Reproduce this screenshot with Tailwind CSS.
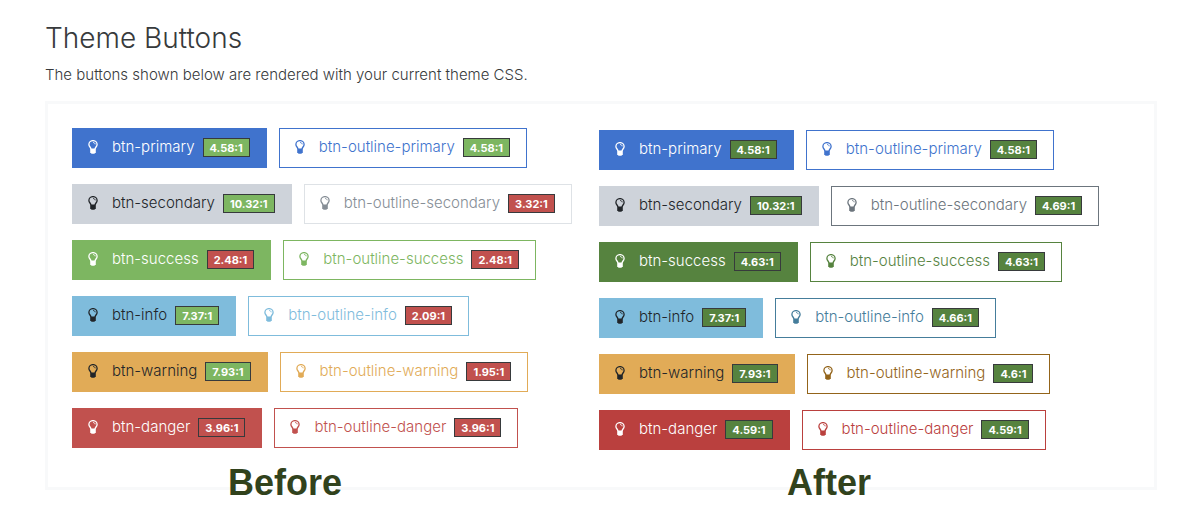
<!DOCTYPE html>
<html lang="en">
<head>
    <meta charset="UTF-8">
    <meta name="viewport" content="width=device-width, initial-scale=1.0">
    <title>Theme Buttons</title>
    <script src="https://cdn.jsdelivr.net/npm/@tailwindcss/browser@4"></script>
</head>
<body class="bg-white text-[#373a3c] font-['Inter',sans-serif]">

    <svg class="hidden">
        <symbol id="bulb" viewBox="0 0 10 14">
            <path d="M2.900 9C2.900 7.300 .9 6.600 .9 4.400A4.100 3.800 0 0 1 9.100 4.400C9.100 6.600 7.100 7.300 7.100 9" fill="none" stroke="currentColor" stroke-width="1.300"/>
            <path d="M5 2.500C6.200 2.500 7.100 3.200 7.200 4.300" fill="none" stroke="currentColor" stroke-width=".9"/>
            <path d="M2.200 8.400H7.800V12.300L6.400 13.800H3.600L2.200 12.300Z" fill="currentColor"/>
        </symbol>
    </svg>

    <main class="min-h-screen pl-[45px] pr-[30px] pt-5 pb-8">
        <h1 class="text-[28px] leading-9 font-light">Theme Buttons</h1>
        <p class="mt-2 text-[15px] leading-[22px] font-light">The buttons shown below are rendered with your current theme CSS.</p>

        <div class="mt-[15px] border-3 border-[#f8f9fa] pl-6 pr-7 pt-6 pb-[37px] grid grid-cols-2">
            <section class="relative">
                <div id="before" class="flex flex-col gap-4"></div>
                <h2 class="absolute left-[156px] -bottom-[53px] text-4xl leading-10 font-bold text-[#31421c] font-['Liberation_Sans',sans-serif]">Before</h2>
            </section>
            <section class="relative">
                <div id="after" class="flex flex-col gap-4 pt-0.5"></div>
                <h2 class="absolute left-[188px] -bottom-[53px] text-4xl leading-10 font-bold text-[#31421c] font-['Liberation_Sans',sans-serif]">After</h2>
            </section>
        </div>
    </main>

    <script>
        // [name, solid classes, solid badge, solid ratio, outline classes, outline badge, outline ratio]
        const pass = "bg-[#7db661]";
        const fail = "bg-[#c1514e]";
        const passDark = "bg-[#56833f]";

        const before = [
            ["primary", "bg-[#4073cd] border-[#4073cd] text-white", pass, "4.58:1", "border-[#4073cd] text-[#4073cd]", pass, "4.58:1"],
            ["secondary", "bg-[#ced3da] border-[#ced3da] text-[#212529]", pass, "10.32:1", "border-[#dee2e6] text-[#868e96]", fail, "3.32:1"],
            ["success", "bg-[#7db661] border-[#7db661] text-white", fail, "2.48:1", "border-[#7db661] text-[#7db661]", fail, "2.48:1"],
            ["info", "bg-[#7fbcdc] border-[#7fbcdc] text-[#212529]", pass, "7.37:1", "border-[#7fbcdc] text-[#7fbcdc]", fail, "2.09:1"],
            ["warning", "bg-[#e1ab57] border-[#e1ab57] text-[#212529]", pass, "7.93:1", "border-[#e1ab57] text-[#e1ab57]", fail, "1.95:1"],
            ["danger", "bg-[#c1514e] border-[#c1514e] text-white", fail, "3.96:1", "border-[#c1514e] text-[#c1514e]", fail, "3.96:1"],
        ];

        const after = [
            ["primary", "bg-[#4073cd] border-[#4073cd] text-white", passDark, "4.58:1", "border-[#4073cd] text-[#4073cd]", passDark, "4.58:1"],
            ["secondary", "bg-[#ced3da] border-[#ced3da] text-[#212529]", passDark, "10.32:1", "border-[#6c757d] text-[#6c757d]", passDark, "4.69:1"],
            ["success", "bg-[#56833f] border-[#56833f] text-white", passDark, "4.63:1", "border-[#56833f] text-[#56833f]", passDark, "4.63:1"],
            ["info", "bg-[#7fbcdc] border-[#7fbcdc] text-[#212529]", passDark, "7.37:1", "border-[#457d9b] text-[#457d9b]", passDark, "4.66:1"],
            ["warning", "bg-[#e1ab57] border-[#e1ab57] text-[#212529]", passDark, "7.93:1", "border-[#93641a] text-[#93641a]", passDark, "4.6:1"],
            ["danger", "bg-[#ba403e] border-[#ba403e] text-white", passDark, "4.59:1", "border-[#ba403e] text-[#ba403e]", passDark, "4.59:1"],
        ];

        function button(label, classes, badge, ratio) {
            return `<button type="button" class="h-10 pl-[15px] pr-4 pb-0.5 flex items-center border whitespace-nowrap text-[15px] leading-5 font-light cursor-pointer ${classes}">
                <svg class="w-2.5 h-3.5 mr-3.5 shrink-0" aria-hidden="true"><use href="#bulb"/></svg>
                <span>${label}</span>
                <span class="ml-2 px-1.5 h-[19px] leading-[18px] border border-[#373a3c] text-[11px] font-bold text-white ${badge}">${ratio}</span>
            </button>`;
        }

        function render(id, rows) {
            document.getElementById(id).innerHTML = rows.map(([name, solid, solidBadge, solidRatio, outline, outlineBadge, outlineRatio]) =>
                `<div class="flex gap-3">
                    ${button("btn-" + name, solid, solidBadge, solidRatio)}
                    ${button("btn-outline-" + name, outline, outlineBadge, outlineRatio)}
                </div>`
            ).join("");
        }

        render("before", before);
        render("after", after);
    </script>
</body>
</html>
